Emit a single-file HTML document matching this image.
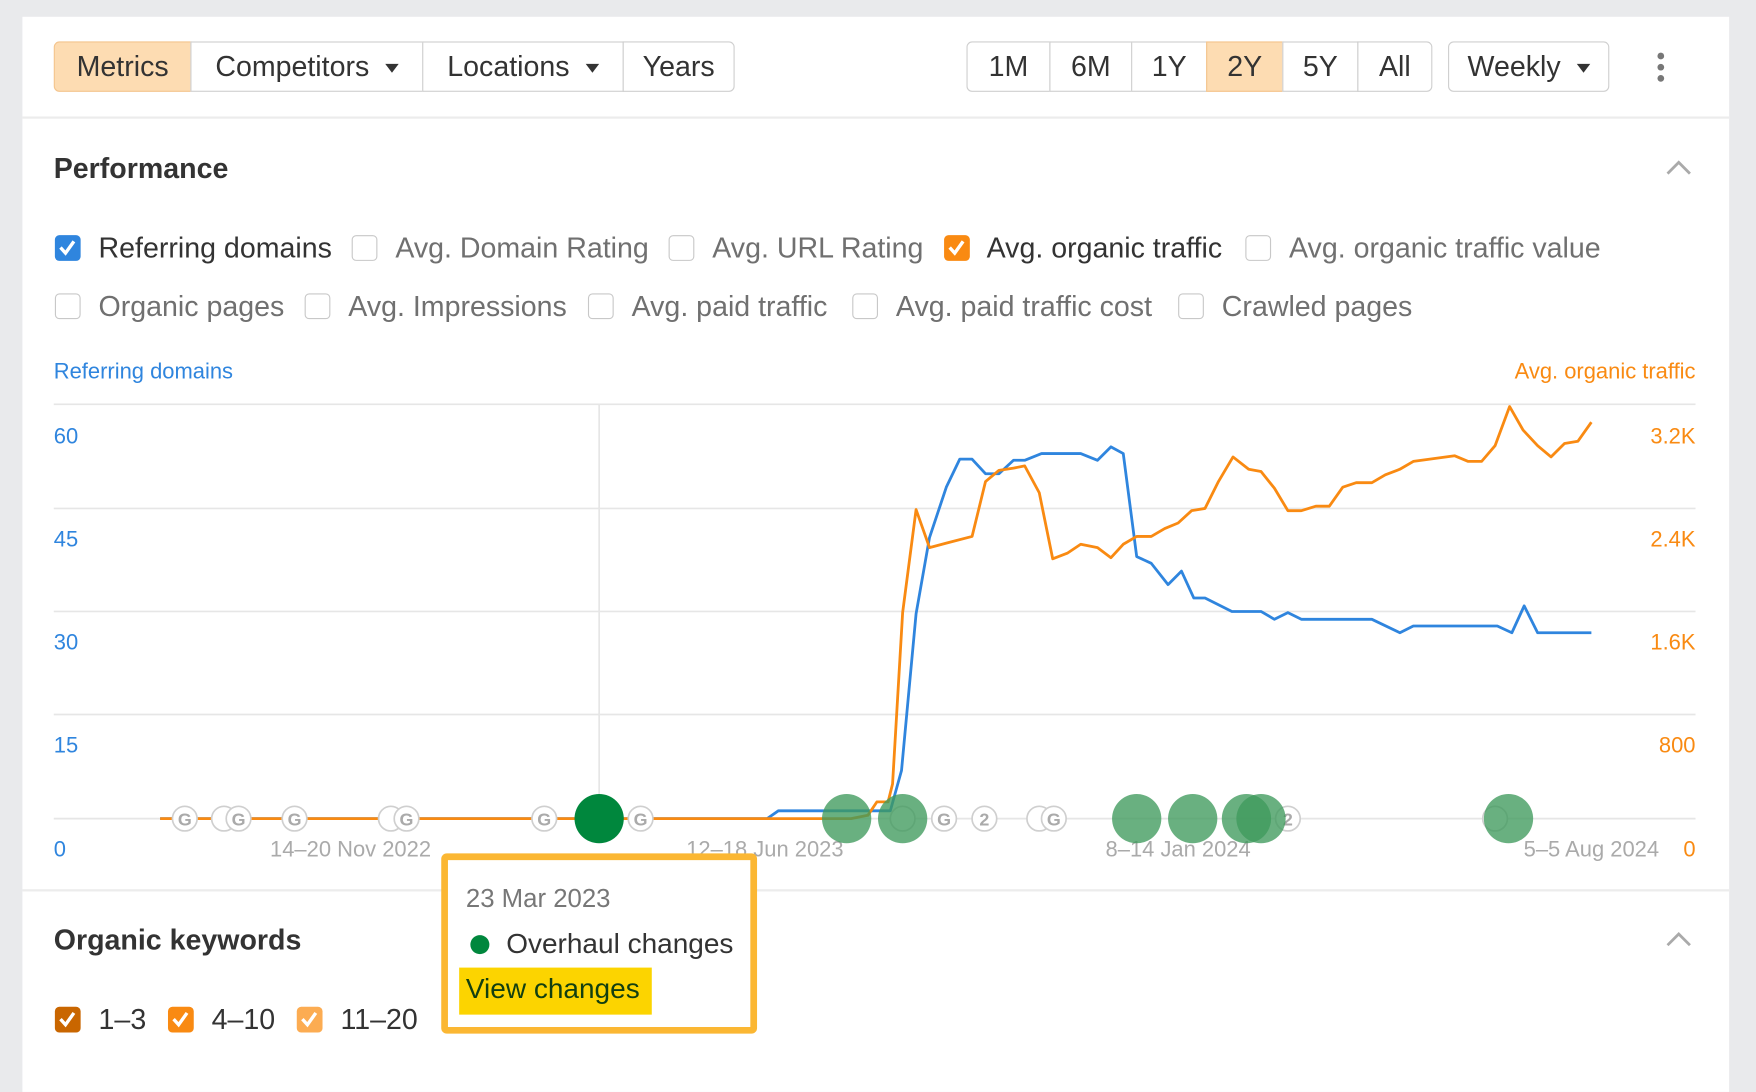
<!DOCTYPE html>
<html><head><meta charset="utf-8"><style>
html,body{margin:0;padding:0;background:#e9eaec;overflow:hidden;width:1756px;height:1058px}
#w{position:absolute;left:0;top:0;width:1568px;height:945px;transform:scale(1.1199);transform-origin:0 0;font-family:"Liberation Sans",sans-serif}
.a{position:absolute;white-space:nowrap}
.card{position:absolute;left:20px;top:15px;width:1524px;height:960px;background:#fff}
.btn{position:absolute;top:37px;height:43px;border:1px solid #cfcfcf;background:#fff;font-size:25.5px;color:#333;line-height:45px;text-align:center;box-sizing:content-box;white-space:nowrap}
.on{background:#fddcb2;border-color:#f4c58e}
.tri{display:inline-block;width:0;height:0;border-left:6px solid transparent;border-right:6px solid transparent;border-top:8px solid #333;margin-left:14px;vertical-align:middle}
.cb{position:absolute;width:23px;height:23px;border:1.5px solid #c8c8c8;border-radius:4px;box-sizing:border-box;background:#fff}
.cbc{border:none}
.cbc svg{position:absolute;left:3px;top:3px}
.lbl{position:absolute;font-size:25.5px;color:#707070;white-space:nowrap;line-height:26px}
.dk{color:#333}
</style></head><body><div id="w">
<div class="card"></div>
<div class="a" style="left:20px;top:104px;width:1524px;height:2px;background:#ececec"></div>
<div class="a" style="left:20px;top:794px;width:1524px;height:2px;background:#ececec"></div>

<div class="btn on" style="left:48px;width:121px;border-radius:5px 0 0 5px">Metrics</div>
<div class="btn" style="left:170px;width:206px">Competitors<span class="tri"></span></div>
<div class="btn" style="left:377px;width:178px">Locations<span class="tri"></span></div>
<div class="btn" style="left:556px;width:98px;border-radius:0 5px 5px 0">Years</div>

<div class="btn" style="left:863px;width:73px;border-radius:5px 0 0 5px">1M</div>
<div class="btn" style="left:937px;width:72px">6M</div>
<div class="btn" style="left:1010px;width:66px">1Y</div>
<div class="btn on" style="left:1077px;width:67px">2Y</div>
<div class="btn" style="left:1145px;width:66px">5Y</div>
<div class="btn" style="left:1212px;width:65px;border-radius:0 5px 5px 0">All</div>
<div class="btn" style="left:1293px;width:142px;border-radius:5px">Weekly<span class="tri"></span></div>
<div class="a" style="left:1480px;top:47px;width:6px;height:6px;border-radius:3px;background:#777"></div>
<div class="a" style="left:1480px;top:57px;width:6px;height:6px;border-radius:3px;background:#777"></div>
<div class="a" style="left:1480px;top:67px;width:6px;height:6px;border-radius:3px;background:#777"></div>

<div class="a" style="left:48px;top:137px;font-size:25.5px;font-weight:bold;color:#333">Performance</div>
<svg class="a" style="left:1487px;top:142px" width="24" height="16"><path d="M2 13 L12 3 L22 13" fill="none" stroke="#aaa" stroke-width="2.5"/></svg>

<div class="cb cbc" style="left:49px;top:210px;background:#2f85de;border-radius:4px"><svg width="17" height="17"><path d="M2 8 L6.5 13 L14 2.5" fill="none" stroke="#fff" stroke-width="3"/></svg></div>
<div class="lbl dk" style="left:88px;top:209px">Referring domains</div>
<div class="cb" style="left:314px;top:210px"></div><div class="lbl" style="left:353px;top:209px">Avg. Domain Rating</div>
<div class="cb" style="left:597px;top:210px"></div><div class="lbl" style="left:636px;top:209px">Avg. URL Rating</div>
<div class="cb cbc" style="left:843px;top:210px;background:#f98a12"><svg width="17" height="17"><path d="M2 8 L6.5 13 L14 2.5" fill="none" stroke="#fff" stroke-width="3"/></svg></div>
<div class="lbl dk" style="left:881px;top:209px">Avg. organic traffic</div>
<div class="cb" style="left:1112px;top:210px"></div><div class="lbl" style="left:1151px;top:209px">Avg. organic traffic value</div>
<div class="cb" style="left:49px;top:262px"></div><div class="lbl" style="left:88px;top:261px">Organic pages</div>
<div class="cb" style="left:272px;top:262px"></div><div class="lbl" style="left:311px;top:261px">Avg. Impressions</div>
<div class="cb" style="left:525px;top:262px"></div><div class="lbl" style="left:564px;top:261px">Avg. paid traffic</div>
<div class="cb" style="left:761px;top:262px"></div><div class="lbl" style="left:800px;top:261px">Avg. paid traffic cost</div>
<div class="cb" style="left:1052px;top:262px"></div><div class="lbl" style="left:1091px;top:261px">Crawled pages</div>

<svg class="a" style="left:0;top:0" width="1568" height="945" font-family="Liberation Sans, sans-serif">
<text x="48" y="338" font-size="19.6" fill="#2f85de">Referring domains</text>
<text x="1514" y="338" font-size="19.6" fill="#f98a12" text-anchor="end">Avg. organic traffic</text>
<g stroke="#e6e6e6" stroke-width="1.5"><line x1="48" y1="361" x2="1514" y2="361"/><line x1="48" y1="454" x2="1514" y2="454"/><line x1="48" y1="546" x2="1514" y2="546"/><line x1="48" y1="638" x2="1514" y2="638"/><line x1="48" y1="731" x2="1514" y2="731"/><line x1="535" y1="361" x2="535" y2="731"/></g>
<g font-size="19.6" fill="#2f85de"><text x="48" y="396">60</text><text x="48" y="488">45</text><text x="48" y="580">30</text><text x="48" y="672">15</text><text x="48" y="765">0</text></g>
<g font-size="19.6" fill="#f98a12" text-anchor="end"><text x="1514" y="396">3.2K</text><text x="1514" y="488">2.4K</text><text x="1514" y="580">1.6K</text><text x="1514" y="672">800</text><text x="1514" y="765">0</text></g>
<g font-size="19.6" fill="#aaa" text-anchor="middle"><text x="313" y="765">14–20 Nov 2022</text><text x="683" y="765">12–18 Jun 2023</text><text x="1052" y="765">8–14 Jan 2024</text><text x="1421" y="765">5–5 Aug 2024</text></g>
<polyline fill="none" stroke="#2f85de" stroke-width="2.5" stroke-linejoin="round" points="143,731 685,731 695,724 795,724 805,688 818,548 830,480 845,435 857,410 868,410 880,423 892,423 905,411 915,411 930,405 965,405 980,411 992,399 1003,405 1015,497 1028,503 1043,522 1055,510 1066,534 1076,534 1100,546 1126,546 1138,553 1150,547 1162,553 1225,553 1250,565 1262,559 1337,559 1350,565 1361,541 1373,565 1421,565"/>
<polyline fill="none" stroke="#f98a12" stroke-width="2.5" stroke-linejoin="round" points="143,731 760,731 775,728 783,716 793,716 797,700 806,547 818,455 830,489 845,485 868,479 880,430 892,420 905,418 915,416 928,440 940,499 953,494 965,486 980,489 992,498 1003,486 1015,479 1028,479 1040,472 1052,467 1064,456 1076,454 1088,430 1101,408 1115,419 1126,421 1138,436 1150,456 1162,456 1175,452 1187,452 1199,435 1211,431 1225,431 1237,424 1250,419 1262,412 1299,407 1311,412 1323,412 1335,398 1348,363 1360,384 1373,398 1385,408 1397,396 1409,394 1421,377"/>
<g font-size="16" font-weight="bold" fill="#aaa" text-anchor="middle">
<g stroke="#cfcfcf" stroke-width="1.5" fill="#fff"><circle cx="165" cy="731" r="11"/><circle cx="200" cy="731" r="11"/><circle cx="213" cy="731" r="11"/><circle cx="263" cy="731" r="11"/><circle cx="349" cy="731" r="11"/><circle cx="363" cy="731" r="11"/><circle cx="486" cy="731" r="11"/><circle cx="572" cy="731" r="11"/><circle cx="806" cy="731" r="11"/><circle cx="843" cy="731" r="11"/><circle cx="879" cy="731" r="11"/><circle cx="928" cy="731" r="11"/><circle cx="941" cy="731" r="11"/><circle cx="1150" cy="731" r="11"/><circle cx="1335" cy="731" r="11"/></g>
<text x="165" y="737">G</text><text x="213" y="737">G</text><text x="263" y="737">G</text><text x="363" y="737">G</text><text x="486" y="737">G</text><text x="572" y="737">G</text><text x="843" y="737">G</text><text x="879" y="737">2</text><text x="941" y="737">G</text><text x="1150" y="737">2</text>
</g>
<g fill="#3f9a5c" fill-opacity="0.78"><circle cx="756" cy="731" r="22"/><circle cx="806" cy="731" r="22"/><circle cx="1015" cy="731" r="22"/><circle cx="1065" cy="731" r="22"/><circle cx="1113" cy="731" r="22"/><circle cx="1126" cy="731" r="22"/><circle cx="1347" cy="731" r="22"/></g>
<circle cx="535" cy="731" r="22" fill="#00873d"/>
</svg>

<div class="a" style="left:48px;top:826px;font-size:25.5px;font-weight:bold;color:#333">Organic keywords</div>
<svg class="a" style="left:1487px;top:831px" width="24" height="16"><path d="M2 13 L12 3 L22 13" fill="none" stroke="#aaa" stroke-width="2.5"/></svg>
<div class="cb cbc" style="left:49px;top:899px;background:#c96600"><svg width="17" height="17"><path d="M2 8 L6.5 13 L14 2.5" fill="none" stroke="#fff" stroke-width="3"/></svg></div>
<div class="lbl dk" style="left:88px;top:898px">1–3</div>
<div class="cb cbc" style="left:150px;top:899px;background:#f98a12"><svg width="17" height="17"><path d="M2 8 L6.5 13 L14 2.5" fill="none" stroke="#fff" stroke-width="3"/></svg></div>
<div class="lbl dk" style="left:189px;top:898px">4–10</div>
<div class="cb cbc" style="left:265px;top:899px;background:#fcac52"><svg width="17" height="17"><path d="M2 8 L6.5 13 L14 2.5" fill="none" stroke="#fff" stroke-width="3"/></svg></div>
<div class="lbl dk" style="left:304px;top:898px">11–20</div>

<div class="a" style="left:394px;top:762px;width:270px;height:149px;border:6px solid #fbb733;border-radius:5px;background:#fff"></div>
<div class="a" style="left:416px;top:789px;font-size:23px;color:#777">23 Mar 2023</div>
<div class="a" style="left:420px;top:835px;width:17px;height:17px;border-radius:50%;background:#00873d"></div>
<div class="a" style="left:452px;top:829px;font-size:25px;color:#333">Overhaul changes</div>
<div class="a" style="left:410px;top:864px;width:172px;height:42px;background:#fcd400"></div>
<div class="a" style="left:416px;top:869px;font-size:25px;color:#123f10">View changes</div>
</div></body></html>
